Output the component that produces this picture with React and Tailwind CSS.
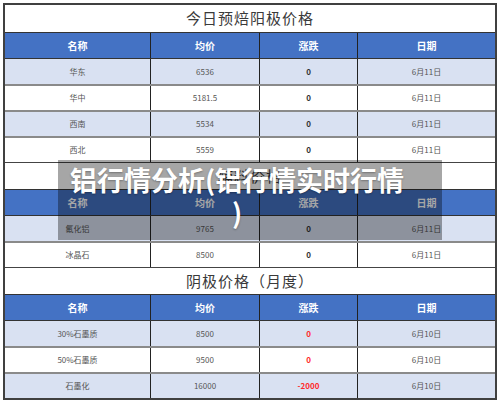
const cjk = { fontFamily: '"Noto Sans CJK SC", "Noto Sans", sans-serif' };

const sections = [
  {
    title: '今日预焙阳极价格',
    rows: [
      ['华东', '6536', '0', '6月11日'],
      ['华中', '5181.5', '0', '6月11日'],
      ['西南', '5534', '0', '6月11日'],
      ['西北', '5559', '0', '6月11日'],
    ],
  },
  {
    title: '辅料价格',
    rows: [
      ['氟化铝', '9765', '0', '6月11日'],
      ['冰晶石', '8500', '0', '6月11日'],
    ],
  },
  {
    title: '阴极价格（月度）',
    red: true,
    rows: [
      ['30%石墨质', '8500', '0', '6月10日'],
      ['50%石墨质', '9500', '0', '6月10日'],
      ['石墨化', '16000', '-2000', '6月10日'],
    ],
  },
];

const cols = 'grid grid-cols-[145px_109px_98px_138px]';

const Section = ({ s, first }) => (
  <div>
    <div className={`h-[27px] flex items-center justify-center bg-white text-[15px] text-[#3a3a3a] tracking-[1px] ${first ? '' : 'border-t border-[#444]'}`}>
      {s.title}
    </div>
    <div className={`${cols} h-[26px] bg-[#4472c4] border-t border-[#333] text-white text-[10px] font-bold`}>
      {['名称', '均价', '涨跌', '日期'].map((h, i) => (
        <div key={h} className={`flex items-center justify-center ${i > 0 ? 'border-l border-[#222]' : ''}`}>{h}</div>
      ))}
    </div>
    {s.rows.map((r, ri) => (
      <div
        key={r[0]}
        className={`${cols} h-[26px] text-[8px] text-[#555] ${ri === 0 ? 'border-t border-[#333]' : 'border-t-2 border-[#8a8a8a]'} ${ri % 2 === 0 ? 'bg-[#d9e1f2]' : 'bg-white'}`}
      >
        {r.map((c, i) => (
          <div
            key={i}
            className={`flex items-center justify-center ${i > 0 ? 'border-l border-[#222]' : ''} ${i === 2 ? (s.red ? 'font-bold text-[#ff2a2a]' : 'font-bold text-[#333]') : ''}`}
          >
            {c}
          </div>
        ))}
      </div>
    ))}
  </div>
);

export default function App() {
  return (
    <div className="relative w-[500px] h-[402px] bg-white overflow-hidden" style={cjk}>
      <div className="ml-[3px] mt-[3px] w-[494px] border-2 border-[#404040]">
        {sections.map((s, i) => (
          <Section key={s.title} s={s} first={i === 0} />
        ))}
      </div>
      <div className="absolute left-[58px] top-[160px] w-[384px] h-[80px] bg-black/35 pl-[4px] pr-[30px] pt-[3px]">
        <p className="text-center text-white font-bold text-[27px] leading-[33px] whitespace-nowrap [text-shadow:0_1px_2px_rgba(0,0,0,0.3)]">
          铝行情分析(铝行情实时行情<br />)
        </p>
      </div>
    </div>
  );
}
